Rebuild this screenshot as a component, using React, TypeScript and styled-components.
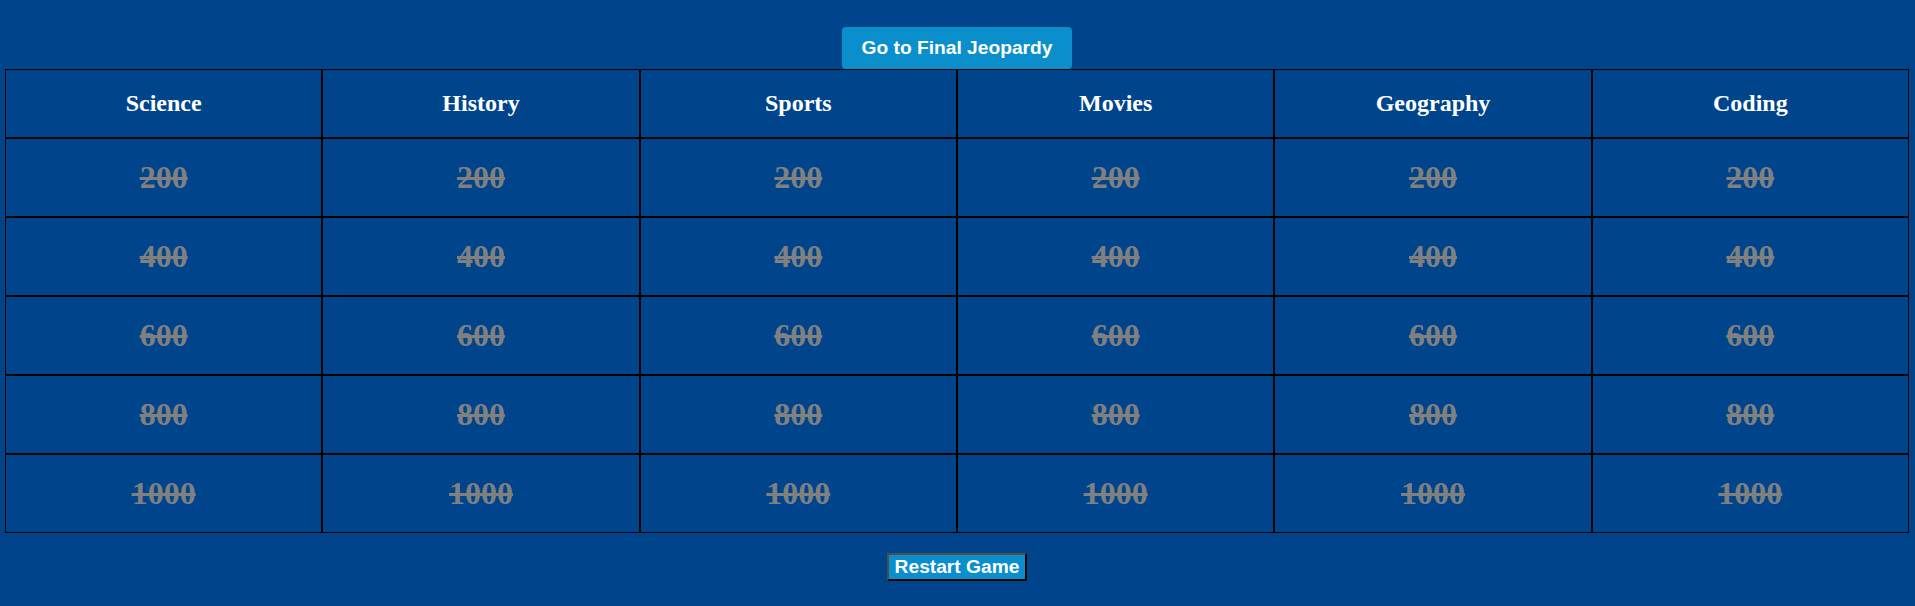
import React from "react";
import styled, { createGlobalStyle } from "styled-components";

const GlobalStyle = createGlobalStyle`
  html, body {
    margin: 0;
    padding: 0;
    background: #00448b;
  }
  body {
    font-family: "Liberation Serif", "Times New Roman", serif;
  }
`;

const Page = styled.div`
  display: flex;
  flex-direction: column;
  align-items: center;
  padding: 27px 6px 25px 5px;
  background: #00448b;
  min-height: 606px;
  box-sizing: border-box;
`;

const FinalButton = styled.button`
  font-family: "Liberation Sans", Arial, sans-serif;
  font-weight: bold;
  font-size: 19.2px;
  line-height: 22px;
  color: #ffffff;
  background: #0a8fcc;
  border: none;
  border-radius: 4px;
  padding: 10px 20px;
  cursor: pointer;
`;

const Board = styled.div`
  width: 100%;
  display: grid;
  grid-template-columns: repeat(6, 1fr);
  grid-template-rows: 69px repeat(5, 79px);
`;

const Cell = styled.div<{ $header?: boolean; $used?: boolean }>`
  display: flex;
  align-items: center;
  justify-content: center;
  box-sizing: border-box;
  border: 1px solid #000;
  background: #00448b;
  font-family: "Liberation Serif", "Times New Roman", serif;
  font-weight: bold;
  font-size: ${(p) => (p.$header ? "24px" : "32px")};
  color: ${(p) => (p.$header ? "#ffffff" : p.$used ? "#808080" : "#ffcc00")};
  text-decoration: ${(p) => (p.$used ? "line-through" : "none")};
  cursor: ${(p) => (p.$header ? "default" : "pointer")};
`;

const RestartButton = styled.button`
  margin-top: 20px;
  font-family: "Liberation Sans", Arial, sans-serif;
  font-weight: bold;
  font-size: 19.2px;
  line-height: 22px;
  color: #ffffff;
  background: #0a8fcc;
  padding: 1px 6px;
  border-style: solid;
  border-width: 2px;
  border-color: #4d4d4d #000000 #000000 #4d4d4d;
  cursor: pointer;
`;

const categories = ["Science", "History", "Sports", "Movies", "Geography", "Coding"];
const values = [200, 400, 600, 800, 1000];

export default function App() {
  return (
    <>
      <GlobalStyle />
      <Page>
        <FinalButton>Go to Final Jeopardy</FinalButton>
        <Board>
          {categories.map((c) => (
            <Cell key={c} $header>
              {c}
            </Cell>
          ))}
          {values.map((v) =>
            categories.map((c) => (
              <Cell key={c + v} $used>
                {v}
              </Cell>
            ))
          )}
        </Board>
        <RestartButton>Restart Game</RestartButton>
      </Page>
    </>
  );
}
